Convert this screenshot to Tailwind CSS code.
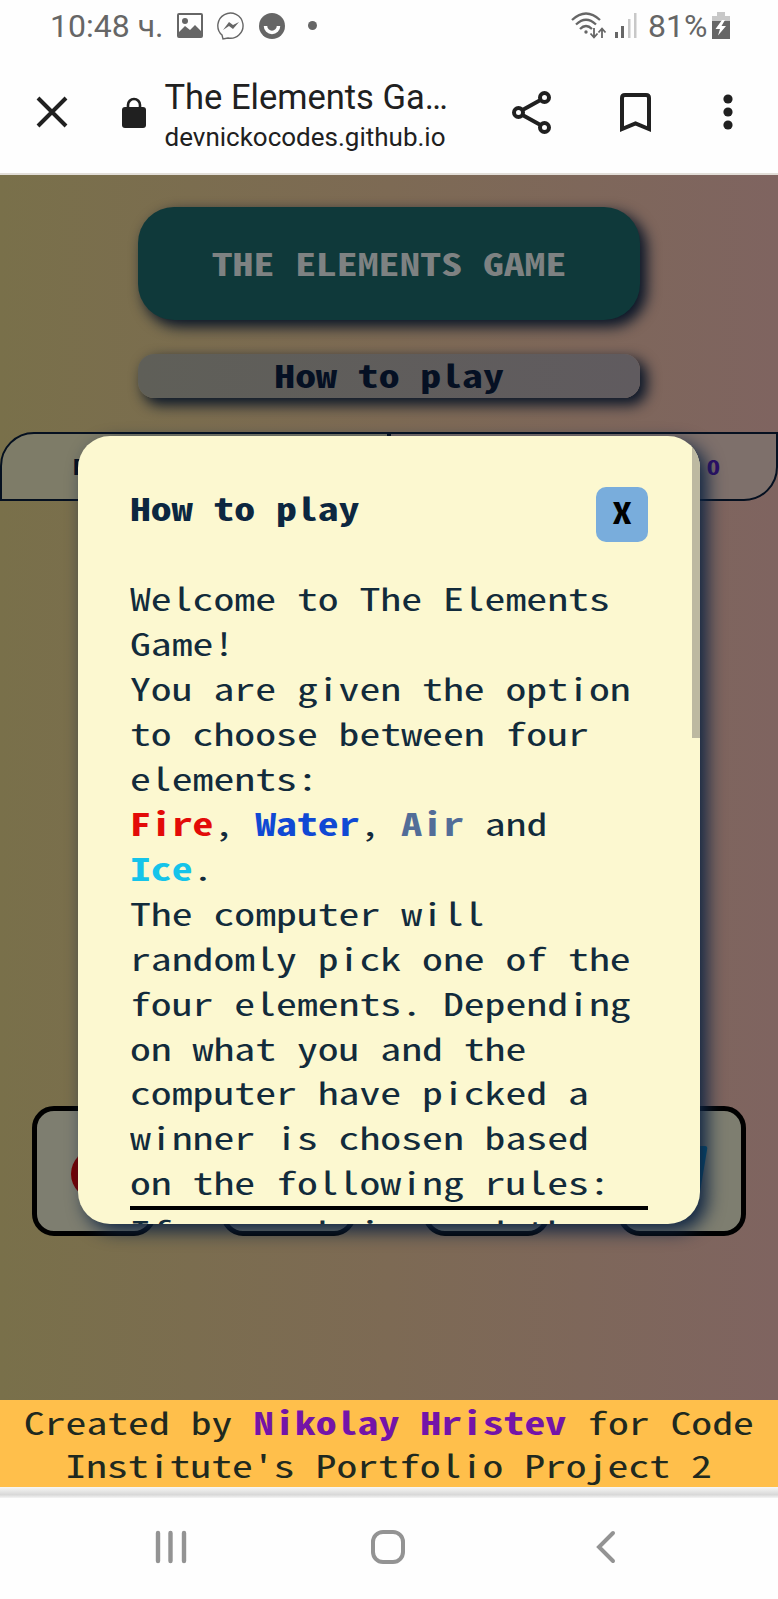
<!DOCTYPE html>
<html lang="en">
<head>
<meta charset="utf-8">
<title>The Elements Game</title>
<script src="https://cdn.jsdelivr.net/npm/@tailwindcss/browser@4"></script>
</head>
<body class="bg-[#fefefe]">
<div class="flex h-[1599px] w-[778px] flex-col overflow-hidden font-['Noto_Sans_Mono_CJK_SC','DejaVu_Sans_Mono',monospace]">
  <!-- Status bar -->
  <div class="flex h-[51px] items-center pl-[50px] pr-[48px] font-[Roboto] text-[32px] text-[#666]">
    <span class="w-[112px] whitespace-nowrap pt-[1px] leading-[51px]">10:48 ч.</span>
    <svg class="ml-[15px] h-[25px] w-[26px]" viewBox="0 0 26 25"><path fill="#666" fill-rule="evenodd" d="M2 0H24Q26 0 26 2V23Q26 25 24 25H2Q0 25 0 23V2Q0 0 2 0ZM2 2V19L8 13L13 17L18 12L24 18V2Z"/><circle cx="8" cy="8" r="3" fill="#666"/></svg>
    <svg class="ml-[14px] h-[28px] w-[28px]" viewBox="0 0 28 28" fill="none"><path d="M5 23A12.6 12.6 0 1 1 11 26L6 27Z" stroke="#666" stroke-width="1.4"/><path fill="#666" d="M6 18L12 10L16 13L22 10L16 17L12 14Z"/></svg>
    <svg class="ml-[14px] h-[26px] w-[26px]" viewBox="0 0 26 26"><circle cx="13" cy="13" r="13" fill="#666"/><path d="M6.500 13A6.500 6.500 0 0 0 19.500 13" stroke="#fff" stroke-width="3.500" fill="none"/></svg>
    <span class="ml-[23px] size-[9px] rounded-full bg-[#666]"></span>
    <svg class="ml-auto h-[28px] w-[36px]" viewBox="0 0 36 28" fill="none" stroke="#666" stroke-width="2.300"><path d="M1 8Q15 -5 29 8M5 12.500Q15 3 25 12.500M9 17Q15 11 21 17"/><circle cx="15" cy="20" r="1.700" fill="#666" stroke="none"/><path d="M23 16V25M19.500 21.500L23 25.500L26.500 21.500M31 26V17M27.500 20.500L31 16.500L34.500 20.500" stroke-width="1.800"/></svg>
    <svg class="ml-[7px] h-[25px] w-[24px]" viewBox="0 0 24 25"><path d="M1 19H4V25H1ZM7 13H10V25H7Z" fill="#666"/><path d="M14 6H16.500V25H14ZM20 0H22.500V25H20Z" fill="#c8c8c8"/></svg>
    <span class="ml-[10px] w-[60px] whitespace-nowrap pt-[1px] leading-[51px]">81%</span>
    <svg class="ml-[4px] h-[27px] w-[18px]" viewBox="0 0 18 27"><path d="M5 0H13V4H18V9H0V4H5Z" fill="#c8c8c8"/><path d="M0 9H18V27H0Z" fill="#666"/><path d="M10 8L3.500 17H8L6 23.500L14 14H9.500L13 8Z" fill="#fff"/></svg>
  </div>
  <!-- Browser toolbar -->
  <div class="flex h-[122px] items-center pl-[36px] font-[Roboto] text-[#202020]">
    <svg class="size-[32px]" viewBox="0 0 32 32"><path d="M2 2L30 30M30 2L2 30" stroke="#202020" stroke-width="4"/></svg>
    <svg class="ml-[54px] h-[31px] w-[24px]" viewBox="0 0 24 31"><rect y="10" width="24" height="21" rx="3" fill="#202020"/><path d="M6 11V8A6 6 0 0 1 18 8V11" fill="none" stroke="#202020" stroke-width="2.600"/></svg>
    <div class="ml-[18.500px] w-[300.500px] whitespace-nowrap pt-[8px]">
      <div class="mt-[-1px] text-[34.5px] leading-[42px]">The Elements Ga…</div>
      <div class="mt-[1px] text-[26px] leading-[37px]">devnickocodes.github.io</div>
    </div>
    <svg class="ml-[47px] h-[43px] w-[40px]" viewBox="0 0 40 43" fill="none" stroke="#202020" stroke-width="4"><circle cx="6.500" cy="21.500" r="4.500"/><circle cx="32.500" cy="6.500" r="4.500"/><circle cx="32.500" cy="36.500" r="4.500"/><path d="M10.500 19L28.500 9M10.500 24L28.500 34"/></svg>
    <svg class="ml-[68px] h-[39px] w-[31px]" viewBox="0 0 31 39"><path d="M2 36V5Q2 2 5 2H26Q29 2 29 5V36L15.500 30.500Z" fill="none" stroke="#202020" stroke-width="4"/></svg>
    <svg class="ml-[72px] h-[36px] w-[10px]" viewBox="0 0 10 36" fill="#202020"><circle cx="5" cy="5" r="4.600"/><circle cx="5" cy="18" r="4.600"/><circle cx="5" cy="31" r="4.600"/></svg>
  </div>
  <!-- Game page, dimmed behind the dialog -->
  <main class="relative flex h-[1227px] flex-col items-center border-t-2 border-[#e2ded8] bg-linear-to-r from-[#79704a] via-[#7d6a54] to-[#7f6460]">
    <h1 class="mt-[32px] flex h-[113px] w-[502px] items-center justify-center rounded-[36px] bg-[#0f393a] pb-[2px] text-[31.3px] font-bold text-[#7e8282] shadow-[6px_6px_14px_1px_#0a1628]"><span class="inline-block scale-x-[1.333] whitespace-nowrap leading-none">THE ELEMENTS GAME</span></h1>
    <div class="mt-[34px] flex h-[44px] w-[502px] items-center justify-center rounded-[16px] bg-linear-to-r from-[#5f5f58] to-[#605b5f] pb-[2px] text-[31.3px] font-bold text-[#051023] shadow-[6px_6px_14px_1px_#0a1628]"><span class="inline-block scale-x-[1.333] whitespace-nowrap leading-none">How to play</span></div>
    <div class="mt-[34px] grid h-[69px] w-full grid-cols-2 text-[20.6px] font-bold">
      <div class="flex items-center rounded-tl-[34px] border-2 border-[#051020] bg-[#7e7c68] pb-px pl-[71px] text-[#051020]"><span class="inline-block origin-left scale-x-[1.333] leading-none">Player: 0</span></div>
      <div class="flex items-center justify-end rounded-br-[34px] border-2 border-[#051020] bg-[#7e706b] pb-px pr-[56px] text-[#2d0e68]"><span class="inline-block origin-right scale-x-[1.333] leading-none">0</span></div>
    </div>
    <div class="mt-[605px] flex h-[130px] w-[714px] justify-between">
      <div class="flex w-[124px] items-center rounded-[22px] border-[5px] border-black bg-[#7e7e70] pl-[34px] pt-[6px]"><span class="size-[50px] rounded-full bg-[#780000]"></span></div>
      <div class="ml-[-3px] w-[135px] rounded-[22px] border-[5px] border-black bg-[#7e7e70]"></div>
      <div class="w-[127px] rounded-[22px] border-[5px] border-black bg-[#7e7e70]"></div>
      <div class="flex w-[128px] items-center rounded-[22px] border-[5px] border-black bg-[#7e7e70] pl-[30px]"><svg class="h-[50px] w-[56px]" viewBox="0 0 56 50"><path d="M2 0H52Q55 0 54 4L47 46H7Z" fill="#005a80"/></svg></div>
    </div>
    <!-- Rules dialog -->
    <section class="absolute left-[78px] top-[261px] h-[788px] w-[622px] overflow-hidden rounded-[32px] bg-[#fcf8d0] px-[52px] text-[#122b3b] shadow-[7px_7px_18px_#0e2442]">
      <div class="mt-[51px] flex items-start justify-between">
        <h2 class="origin-left scale-x-[1.333] whitespace-nowrap text-[31.3px] font-bold leading-[42px] text-[#0c2740]">How to play</h2>
        <button class="flex h-[55px] w-[52px] items-center justify-center rounded-[10px] bg-[#79addc] pb-[5px] text-[28.8px] font-bold leading-none text-black"><span class="inline-block scale-x-[1.333]">X</span></button>
      </div>
      <div class="mt-[34px] whitespace-nowrap text-[31.3px] leading-[44.95px]">
        <p class="origin-left scale-x-[1.333]">Welcome to The Elements<br>Game!<br>You are given the option<br>to choose between four<br>elements:<br><b class="text-[#e30b08]">Fire</b>, <b class="text-[#1049d4]">Water</b>, <b class="text-[#526d98]">Air</b> and<br><b class="text-[#15c4ea]">Ice</b>.<br>The computer will<br>randomly pick one of the<br>four elements. Depending<br>on what you and the<br>computer have picked a<br>winner is chosen based<br>on the following rules:</p>
        <hr class="mt-[0.700px] border-t-4 border-black">
        <p class="mt-[-1px] origin-left scale-x-[1.333]">If your choice and the</p>
      </div>
      <span class="absolute right-0 top-0 h-[302px] w-[8px] bg-[#bdb9a1]"></span>
    </section>
  </main>
  <footer class="relative flex h-[87px] flex-col items-center bg-[#ffbf4b] text-[31.3px] leading-[43px] text-[#20291f]">
    <p class="mt-[-0.500px] scale-x-[1.333] whitespace-nowrap">Created by <b class="text-[#7414a8]">Nikolay Hristev</b> for Code</p>
    <p class="scale-x-[1.333] whitespace-nowrap">Institute's Portfolio Project 2</p>
  </footer>
  <div class="h-[11px] bg-linear-to-b from-[#f8f8f6] via-[#d8d8d8] via-70% to-[#f4f4f4]"></div>
  <nav class="flex flex-1 items-start pt-[32px] text-[#939393]">
    <svg class="ml-[155px] h-[34px] w-[32px]" viewBox="0 0 32 34" stroke="currentColor" stroke-width="4.400" stroke-linecap="round"><path d="M3 3V31M15.500 3V31M29 3V31"/></svg>
    <svg class="ml-[184px] size-[34px]" viewBox="0 0 34 34" fill="none" stroke="currentColor" stroke-width="4"><rect x="2" y="2" width="30" height="30" rx="10"/></svg>
    <svg class="ml-[191px] h-[34px] w-[20px]" viewBox="0 0 20 34" fill="none" stroke="currentColor" stroke-width="4" stroke-linecap="round"><path d="M17 3L3 17L17 31"/></svg>
  </nav>
</div>
</body>
</html>
